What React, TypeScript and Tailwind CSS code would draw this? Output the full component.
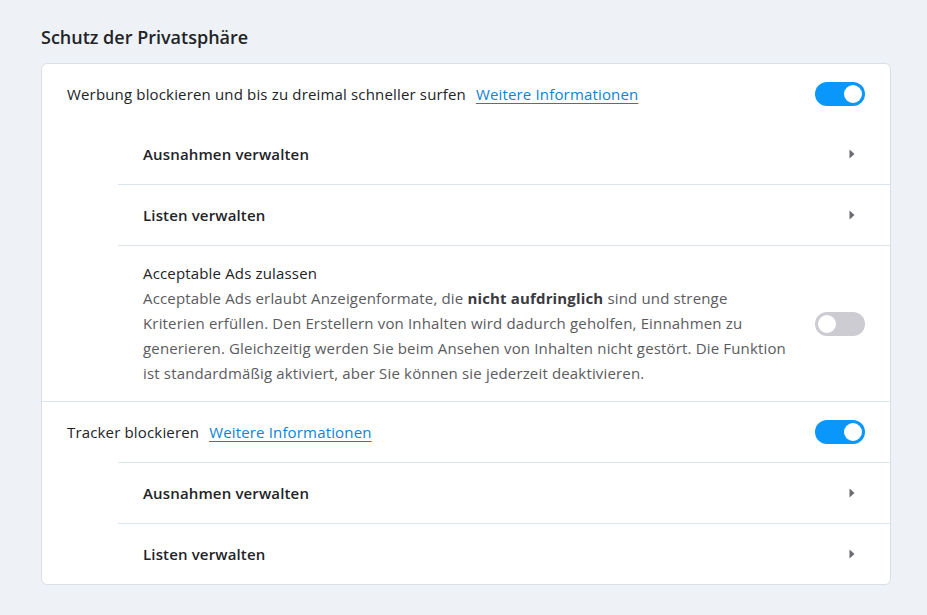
import React from "react";

const font = { fontFamily: '"Open Sans", "Noto Sans", sans-serif' };

function Toggle({ on }: { on: boolean }) {
  return (
    <div
      className={`w-[50px] h-[24px] rounded-full flex items-center px-[3px] shrink-0 ${
        on ? "bg-[#0a97fb] justify-end" : "bg-[#cdccd3] justify-start"
      }`}
    >
      <div className="w-[18px] h-[18px] rounded-full bg-white" />
    </div>
  );
}

function Chevron() {
  return (
    <svg width="6" height="10" viewBox="0 0 6 10" className="mr-[10px]">
      <path d="M0.5 0.5 L5.5 5 L0.5 9.5 Z" fill="#6a6a70" />
    </svg>
  );
}

function SubRow({ label, border }: { label: string; border: boolean }) {
  return (
    <div className={`ml-[76px] flex items-center justify-between pl-[25px] pr-[25px] ${border ? "h-[61px] border-t border-[#dde3ea]" : "h-[60px]"}`}>
      <span className="text-[15px] font-semibold text-[#222326] tracking-[0.01em]">{label}</span>
      <Chevron />
    </div>
  );
}

function Link() {
  return <a className="text-[15px] text-[#0a84d8] underline underline-offset-[3px] ml-[10px]">Weitere Informationen</a>;
}

export default function App() {
  return (
    <div className="min-h-[615px] w-full bg-[#eef2f7] pt-[22px] pl-[41px] pr-[37px]" style={font}>
      <h2 className="text-[18px] font-semibold text-[#222326] leading-[30px] h-[30px]">Schutz der Privatsphäre</h2>
      <div className="mt-[11px] bg-white border border-[#d8dfe7] rounded-[6px] w-[850px] tracking-[0.01em]">
        <div className="h-[60px] flex items-center justify-between pl-[25px] pr-[25px]">
          <div className="flex items-center text-[15px] text-[#222326]">
            <span>Werbung blockieren und bis zu dreimal schneller surfen</span>
            <Link />
          </div>
          <Toggle on />
        </div>
        <SubRow label="Ausnahmen verwalten" border={false} />
        <SubRow label="Listen verwalten" border />
        <div className="ml-[76px] border-t border-[#dde3ea] pl-[25px] pr-[25px] pt-[15px] pb-[15px] flex items-center justify-between">
          <div className="w-[665px] text-[15px] leading-[25px]">
            <div className="text-[#222326]">Acceptable Ads zulassen</div>
            <div className="text-[#5b5b60]">
              Acceptable Ads erlaubt Anzeigenformate, die <b className="font-bold text-[#3a3a3e]">nicht aufdringlich</b> sind und strenge
              <br />
              Kriterien erfüllen. Den Erstellern von Inhalten wird dadurch geholfen, Einnahmen zu
              <br />
              generieren. Gleichzeitig werden Sie beim Ansehen von Inhalten nicht gestört. Die Funktion
              <br />
              ist standardmäßig aktiviert, aber Sie können sie jederzeit deaktivieren.
            </div>
          </div>
          <Toggle on={false} />
        </div>
        <div className="h-[61px] flex items-center justify-between pl-[25px] pr-[25px] border-t border-[#dde3ea]">
          <div className="flex items-center text-[15px] text-[#222326]">
            <span>Tracker blockieren</span>
            <Link />
          </div>
          <Toggle on />
        </div>
        <SubRow label="Ausnahmen verwalten" border />
        <SubRow label="Listen verwalten" border />
      </div>
    </div>
  );
}
